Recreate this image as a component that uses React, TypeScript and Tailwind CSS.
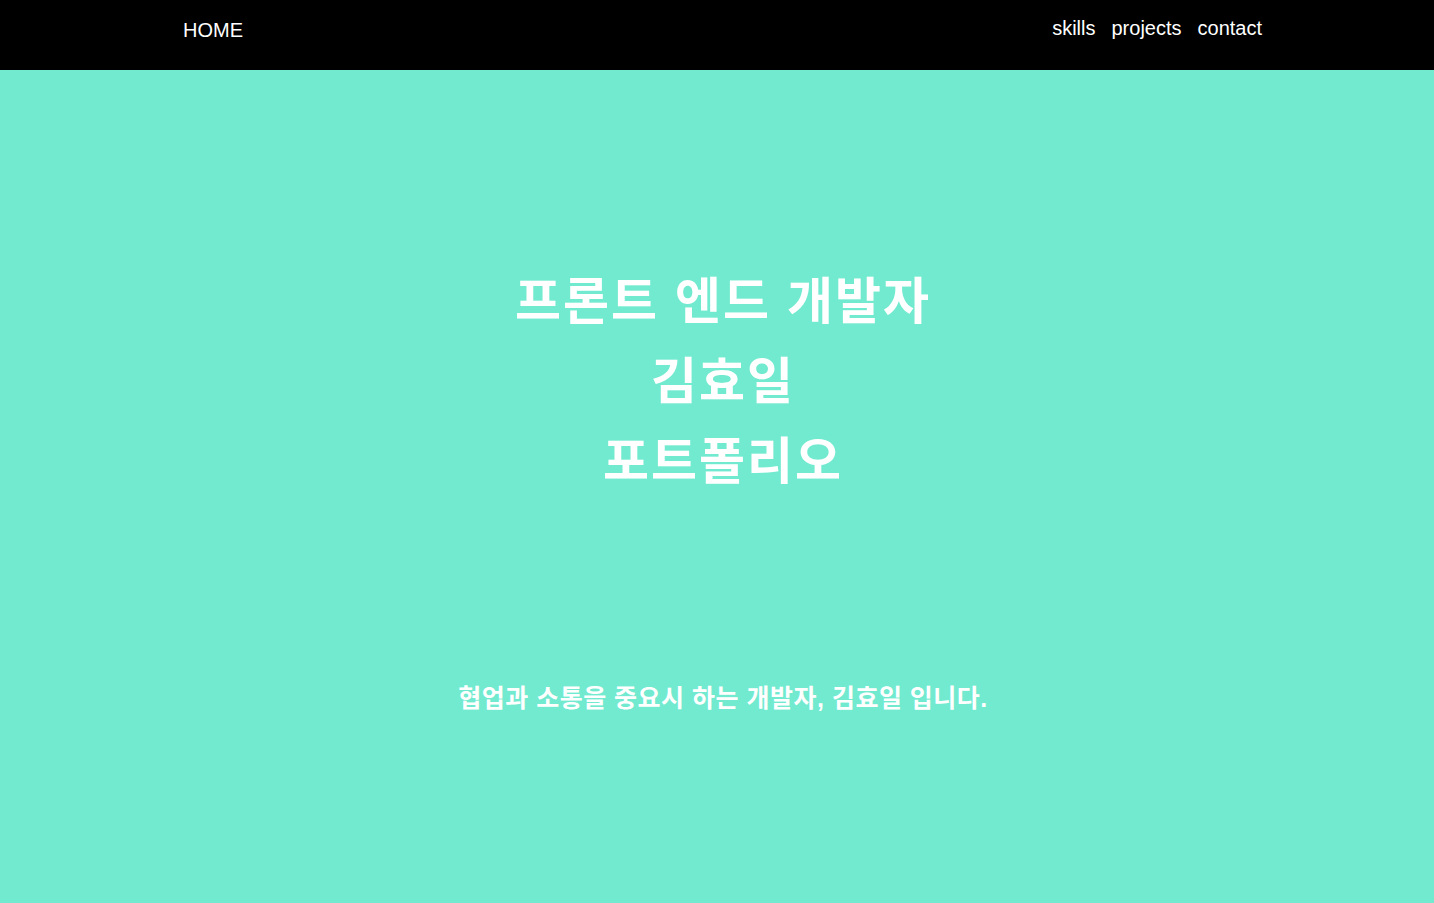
export default function App() {
  return (
    <div className="min-h-screen bg-[#72ead0] font-['Liberation_Sans','Noto_Sans_CJK_KR',sans-serif]">
      <header className="h-[70px] bg-black text-white">
        <nav className="mx-auto flex h-full w-[1090px] items-start justify-between">
          <a className="ml-[11px] mt-[17px] text-[20px] leading-[26px]">HOME</a>
          <ul className="mt-[15px] flex gap-4 text-[20px] leading-[26px]">
            <li>skills</li>
            <li>projects</li>
            <li>contact</li>
          </ul>
        </nav>
      </header>
      <main className="flex flex-col items-center pl-[12px] text-white font-bold">
        <h1 className="mt-[192px] text-center text-[50px] leading-[80px] tracking-[2px]">
          프론트 엔드 개발자
          <br />
          김효일
          <br />
          포트폴리오
        </h1>
        <p className="mt-[179px] text-[25px] leading-[34px] tracking-[0.5px]">
          협업과 소통을 중요시 하는 개발자, 김효일 입니다.
        </p>
      </main>
    </div>
  );
}
